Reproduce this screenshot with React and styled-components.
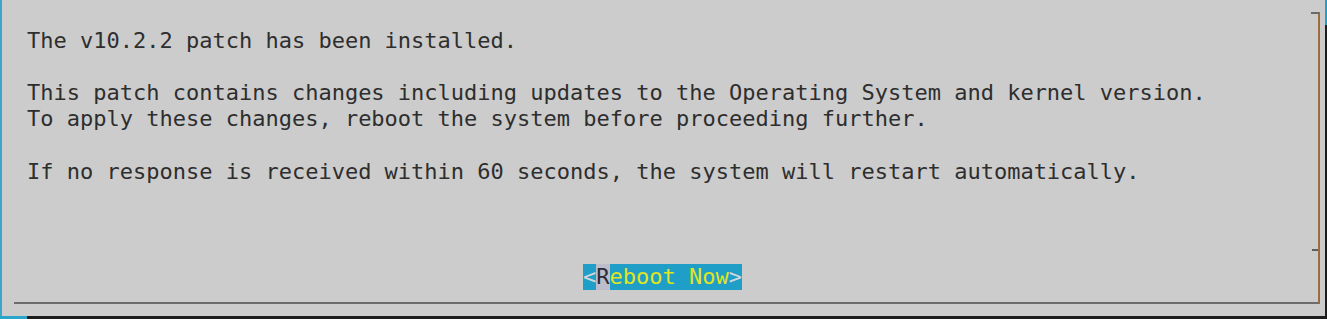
import React from "react";
import styled, { createGlobalStyle } from "styled-components";

const GlobalStyle = createGlobalStyle`
  html, body { margin: 0; padding: 0; background: #1c1c1c; }
  #root { width: 1327px; height: 319px; }
`;

const Screen = styled.div`
  width: 1327px;
  height: 319px;
  display: flex;
  flex-direction: column;
  background: #cccccc;
  overflow: hidden;
`;

const Body = styled.div`
  flex: 1;
  display: flex;
  min-height: 0;
`;

const LeftEdge = styled.div`
  width: 2px;
  background: #3aa6c8;
`;

const RightEdge = styled.div`
  width: 2px;
  background: linear-gradient(to bottom, #1e9fd0 0, #1e9fd0 25px, #1d1d1d 25px);
`;

const Main = styled.div`
  flex: 1;
  padding: 12px 0 0 12px;
`;

const Dialog = styled.div`
  position: relative;
  box-sizing: border-box;
  width: 1305px;
  height: 292px;
  border-right: 1px solid #a0703c;
  border-bottom: 2px solid #6c6c6c;
  box-shadow: 1px 0 0 #4d7bb0;
  padding: 15.5px 0 0 13px;
  font-family: "DejaVu Sans Mono", "Liberation Mono", monospace;
  font-size: 22px;
  color: #2e2e2e;

  &::before {
    content: "";
    position: absolute;
    top: 0;
    right: -1px;
    width: 8px;
    height: 2px;
    background: #6a6a6a;
  }

  &::after {
    content: "";
    position: absolute;
    top: 237px;
    right: 0;
    width: 6px;
    height: 2px;
    background: #5e5e5e;
  }
`;

const Lines = styled.div`
  display: flex;
  flex-direction: column;
`;

const Line = styled.div`
  height: 26.3px;
  line-height: 26.3px;
  white-space: pre;
`;

const ButtonRow = styled(Line)`
  padding-left: ${(p) => p.$col * 13.24}px;
`;

const Button = styled.span`
  display: inline-block;
  vertical-align: top;
  height: 26.3px;
  line-height: 26.3px;
  background: #1f9fc8;
  color: #e2e41c;
`;

const Bracket = styled.span`
  color: #d4d8dc;
`;

const Hotkey = styled.span`
  display: inline-block;
  vertical-align: top;
  background: #bdbdcb;
  color: #2c2c34;
`;

const BottomStrip = styled.div`
  height: 3px;
  display: flex;
`;

const StripSegment = styled.div`
  width: ${(p) => (p.$width ? `${p.$width}px` : "auto")};
  flex: ${(p) => (p.$width ? "none" : 1)};
  background: ${(p) => p.$color};
`;

const lines = [
  "The v10.2.2 patch has been installed.",
  "",
  "This patch contains changes including updates to the Operating System and kernel version.",
  "To apply these changes, reboot the system before proceeding further.",
  "",
  "If no response is received within 60 seconds, the system will restart automatically.",
  "",
  "",
  "",
];

export default function App() {
  return (
    <>
      <GlobalStyle />
      <Screen>
        <Body>
          <LeftEdge />
          <Main>
            <Dialog>
              <Lines>
                {lines.map((t, i) => (
                  <Line key={i}>{t}</Line>
                ))}
                <ButtonRow $col={42}>
                  <Button>
                    <Bracket>&lt;</Bracket>
                    <Hotkey>R</Hotkey>
                    eboot Now
                    <Bracket>&gt;</Bracket>
                  </Button>
                </ButtonRow>
              </Lines>
            </Dialog>
          </Main>
          <RightEdge />
        </Body>
        <BottomStrip>
          <StripSegment $width={27} $color="#2aa6cc" />
          <StripSegment $color="#1d1d1d" />
        </BottomStrip>
      </Screen>
    </>
  );
}
